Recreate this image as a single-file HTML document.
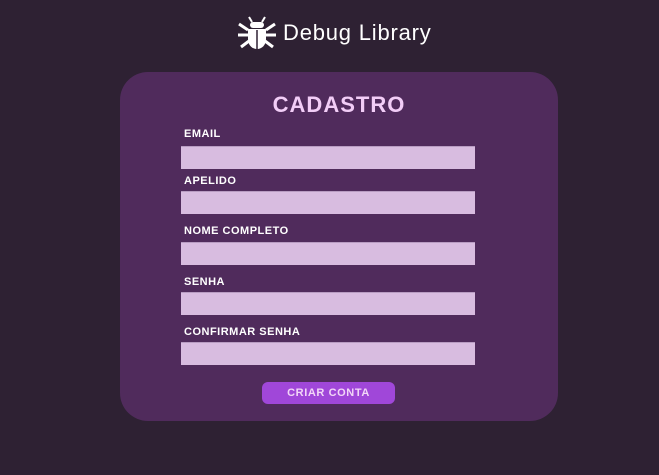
<!DOCTYPE html>
<html><head><style>
body{margin:0;width:659px;height:475px;background:#2e2133;font-family:"Liberation Sans",sans-serif;position:relative;overflow:hidden}
.hdr{position:absolute;left:238px;top:16px;display:flex;align-items:center;color:#fff}
.hdr span{font-size:22px;margin-left:7px;letter-spacing:0.8px}
.card{position:absolute;left:120px;top:72px;width:438px;height:349px;background:#502b5c;border-radius:28px}
h1{position:absolute;left:272px;width:134px;top:92px;margin:0;text-align:center;font-size:22px;font-weight:bold;color:#f2cdf7;letter-spacing:1px}
.l{position:absolute;left:184px;font-size:11px;font-weight:bold;color:#fff;letter-spacing:0.5px}
.i{position:absolute;left:181px;width:294px;height:22px;background:#d8bce0;border-top:1px solid #b89cc2}
.b{position:absolute;left:262px;top:382px;width:133px;height:22px;background:#a047d9;border-radius:6px;color:#f2d6f7;font-size:11px;font-weight:bold;text-align:center;line-height:22px;letter-spacing:0.6px}
</style></head><body>
<div class="hdr"><svg width="38" height="34" viewBox="0 0 38 34" fill="#fff">
<rect x="12" y="6" width="14" height="6" rx="3"/><path d="M11 1l3 5M27 1l-3 5" stroke="#fff" stroke-width="2"/>
<path d="M10 13h18v10c0 6-4 10-9 10s-9-4-9-10z"/>
<path d="M1 8l9 6M37 8l-9 6M0 19h10M38 19h-10M3 31l8-6M35 31l-8-6" stroke="#fff" stroke-width="3"/>
<path d="M19 14v19" stroke="#2e2133" stroke-width="1.5"/></svg><span>Debug Library</span></div>
<div class="card"></div>
<h1>CADASTRO</h1>
<div class="l" style="top:128px">EMAIL</div><div class="i" style="top:146px"></div>
<div class="l" style="top:175px">APELIDO</div><div class="i" style="top:191px"></div>
<div class="l" style="top:225px">NOME COMPLETO</div><div class="i" style="top:242px"></div>
<div class="l" style="top:276px">SENHA</div><div class="i" style="top:292px"></div>
<div class="l" style="top:326px">CONFIRMAR SENHA</div><div class="i" style="top:342px"></div>
<div class="b">CRIAR CONTA</div>
</body></html>
